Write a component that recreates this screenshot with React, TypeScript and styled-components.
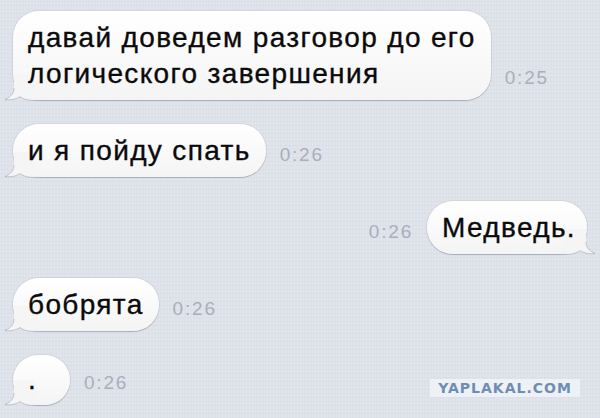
import React from "react";
import styled, { createGlobalStyle } from "styled-components";

const Global = createGlobalStyle`
  html, body { margin: 0; padding: 0; }
  body { background: #dee3ea; }
`;

const Screen = styled.div`
  position: relative;
  width: 600px;
  height: 418px;
  box-sizing: border-box;
  padding: 11px 13px 0 13px;
  display: flex;
  flex-direction: column;
  gap: 24px;
  overflow: hidden;
  background-color: #dee3ea;
  background-image:
    repeating-linear-gradient(90deg, rgba(255,255,255,0.10) 0 1px, transparent 1px 3px),
    repeating-linear-gradient(0deg, rgba(120,130,150,0.05) 0 1px, transparent 1px 4px);
  font-family: "Liberation Sans", Arial, sans-serif;
`;

const Row = styled.div<{ $out?: boolean }>`
  display: flex;
  flex-direction: ${(p) => (p.$out ? "row-reverse" : "row")};
  align-items: flex-end;
  gap: 14px;
`;

const Bubble = styled.div<{ $out?: boolean; $tiny?: boolean }>`
  position: relative;
  box-sizing: border-box;
  min-width: ${(p) => (p.$tiny ? "57px" : "0")};
  padding: ${(p) =>
    p.$tiny ? "7px 15px 7px" : p.$out ? "9px 11px 8px 15px" : "9px 15px 8px 15px"};
  border-radius: 26px;
  background: linear-gradient(#ffffff, #f4f4f5);
  box-shadow: 0 1px 1px rgba(90, 100, 120, 0.35), 0 0 0 1px rgba(150, 160, 175, 0.18);
  color: #0a0a0a;
  font-size: 28px;
  line-height: 36px;
  letter-spacing: 1.35px;
  -webkit-text-stroke: 0.35px #0a0a0a;
`;

const Tail = styled.svg<{ $out?: boolean }>`
  position: absolute;
  bottom: -1px;
  ${(p) => (p.$out ? "right: -10px; transform: scaleX(-1);" : "left: -10px;")}
  width: 34px;
  height: 26px;
  overflow: visible;
`;

const Time = styled.span`
  font-family: "Liberation Sans", Arial, sans-serif;
  font-size: 19px;
  line-height: 18px;
  color: #a9afbb;
  padding-bottom: 13px;
  letter-spacing: 1.8px;
`;

const Watermark = styled.div`
  position: absolute;
  left: 430px;
  top: 379px;
  width: 150px;
  height: 18px;
  background: rgba(240, 243, 247, 0.85);
  display: flex;
  align-items: center;
  justify-content: center;
  font-family: "DejaVu Sans", "Liberation Sans", sans-serif;
  font-weight: 700;
  font-size: 14px;
  letter-spacing: 1px;
  color: #6e8db4;
`;

const BubbleTail = ({ out }: { out?: boolean }) => (
  <Tail $out={out} viewBox="0 0 34 26">
    <path
      d="M11 0 L11 13 C11 18 8 22 2 24.5 C7 25.5 13 24.2 17 21.5 C20 24 25 25.5 32 25.5 L32 0 Z"
      fill="#f5f5f6"
    />
    <path
      d="M11 13 C11 18 8 22 2 24.5 C7 25.5 13 24.2 17 21.5 C20 24 25 25.5 32 25.5"
      fill="none"
      stroke="rgba(110,120,140,0.35)"
      strokeWidth="1"
    />
  </Tail>
);

type Msg = { text: React.ReactNode; time: string; out?: boolean; tiny?: boolean };

const messages: Msg[] = [
  {
    text: (
      <>
        давай доведем разговор до его
        <br />
        логического завершения
      </>
    ),
    time: "0:25",
  },
  { text: "и я пойду спать", time: "0:26" },
  { text: "Медведь.", time: "0:26", out: true },
  { text: "бобрята", time: "0:26" },
  { text: ".", time: "0:26", tiny: true },
];

const BubbleText = styled.span`
  position: relative;
`;

export default function App() {
  return (
    <>
      <Global />
      <Screen>
        {messages.map((m, i) => (
          <Row key={i} $out={m.out}>
            <Bubble $out={m.out} $tiny={m.tiny}>
              <BubbleTail out={m.out} />
              <BubbleText>{m.text}</BubbleText>
            </Bubble>
            <Time>{m.time}</Time>
          </Row>
        ))}
        <Watermark>YAPLAKAL.COM</Watermark>
      </Screen>
    </>
  );
}
